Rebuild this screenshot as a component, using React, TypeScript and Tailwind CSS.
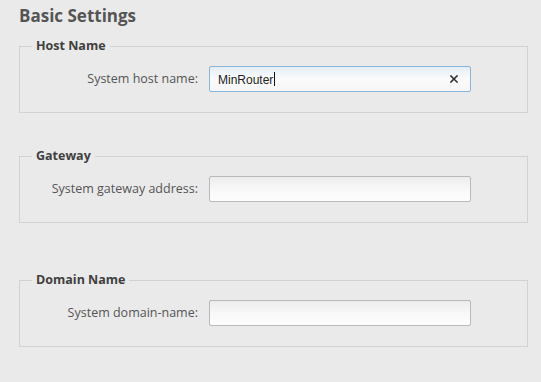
import React from "react";

function Field({
  legend,
  label,
  value,
  focused,
  className,
}: {
  legend: string;
  label: string;
  value?: string;
  focused?: boolean;
  className?: string;
}) {
  return (
    <fieldset
      className={
        "ml-[19px] mr-[13px] border border-[#d2d2d2] px-0 pt-[11px] pb-[20px] " +
        (className ?? "")
      }
    >
      <legend className="ml-[12px] px-[4px] text-[12.5px] leading-[18px] font-bold text-[#404040]">
        {legend}
      </legend>
      <div className="flex items-center">
        <label className="w-[178px] pr-0 text-right text-[12.5px] leading-[18px] text-[#555]">
          {label}
        </label>
        <div
          className={
            "ml-[11px] flex h-[26px] w-[262px] items-center rounded-[2px] border " +
            (focused
              ? "border-[#86b6dc] bg-gradient-to-b from-[#e4eef6] via-[#fbfbfb] to-[#f6f6f6]"
              : "border-[#b9b9b9] bg-gradient-to-b from-[#ececec] via-[#f8f8f8] to-[#fdfdfd]")
          }
        >
          <span
            className="pl-[8px] text-[12px] text-[#222]"
            style={{ fontFamily: '"Liberation Sans", Arial, sans-serif' }}
          >
            {value}
            {focused && (
              <span className="ml-[1px] inline-block h-[14px] w-[1px] translate-y-[2px] bg-[#111]" />
            )}
          </span>
          {focused && (
            <svg
              className="ml-auto mr-[12px]"
              width="8"
              height="8"
              viewBox="0 0 8 8"
            >
              <path
                d="M1 1 L7 7 M7 1 L1 7"
                stroke="#333"
                strokeWidth="1.6"
                strokeLinecap="square"
              />
            </svg>
          )}
        </div>
      </div>
    </fieldset>
  );
}

export default function App() {
  return (
    <div
      className="h-[382px] w-[541px] overflow-hidden bg-[#eaeaea]"
      style={{ fontFamily: '"Open Sans", "Noto Sans", sans-serif' }}
    >
      <h2 className="pl-[19px] pt-[3px] text-[17px] leading-[26px] font-bold text-[#555]">
        Basic Settings
      </h2>
      <Field
        className="mt-[8px]"
        legend="Host Name"
        label="System host name:"
        value="MinRouter"
        focused
      />
      <Field
        className="mt-[34px]"
        legend="Gateway"
        label="System gateway address:"
      />
      <Field
        className="mt-[48px]"
        legend="Domain Name"
        label="System domain-name:"
      />
    </div>
  );
}
